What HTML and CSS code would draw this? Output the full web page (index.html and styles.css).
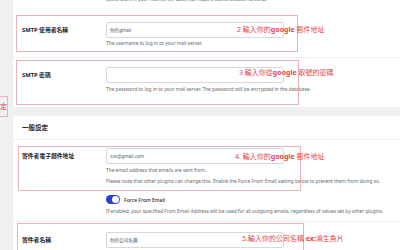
FILE: index.html
```html
<!DOCTYPE html>
<html lang="zh-Hant">

<head>
    <meta charset="UTF-8">
    <meta name="viewport" content="width=device-width, initial-scale=1.0">
    <title>SMTP 設定</title>
    <link rel="stylesheet" href="styles.css">
</head>

<body>
    <div class="page">
        <div class="panel">
            <div class="top">
                <p class="desc">Leave blank if your mail server does not require authentication to send.</p>
            </div>

            <div class="row row-user">
                <div class="label">SMTP 使用者名稱</div>
                <div class="field">
                    <div class="input">你的gmail</div>
                    <p class="desc">The username to log in to your mail server.</p>
                </div>
            </div>

            <div class="row row-pass">
                <div class="label">SMTP 密碼</div>
                <div class="field">
                    <div class="input"></div>
                    <p class="desc">The password to log in to your mail server. The password will be encrypted in the database.</p>
                </div>
            </div>

            <div class="band"></div>
            <div class="heading">一般設定</div>

            <div class="row row-from">
                <div class="label">寄件者電子郵件地址</div>
                <div class="field">
                    <div class="input">xxx@gmail.com</div>
                    <p class="desc first">The email address that emails are sent from.</p>
                    <p class="desc">Please note that other plugins can change this. Enable the Force From Email setting below to prevent them from doing so.</p>
                    <div class="toggle-row">
                        <span class="toggle"></span>
                        <span class="toggle-text">Force From Email</span>
                    </div>
                    <p class="desc">If enabled, your specified From Email Address will be used for all outgoing emails, regardless of values set by other plugins.</p>
                </div>
            </div>

            <div class="row row-name">
                <div class="label">寄件者名稱</div>
                <div class="field">
                    <div class="input">你的公司名稱</div>
                </div>
            </div>
        </div>

        <!-- 標註框 -->
        <div class="mark m0">定</div>
        <div class="mark m1"></div>
        <div class="mark m2"></div>
        <div class="mark m3"></div>
        <div class="mark m4"></div>

        <span class="note n2">2 輸入你的<b>google</b> 郵件地址</span>
        <span class="note n3">3 輸入你從<b>google</b> 取號的密碼</span>
        <span class="note n4">4. 輸入你的<b>google</b> 郵件地址</span>
        <span class="note n5">5.輸入你的公司名稱 <b>ex:</b>鴻生魚片</span>
    </div>
</body>

</html>
```

FILE: styles.css
```css
* {
    box-sizing: border-box;
}

body {
    margin: 0;
    background: #f0f0f1;
    font-family: "Noto Sans", "Noto Sans CJK TC", sans-serif;
    overflow: hidden;
}

.page {
    position: relative;
    height: 250px;
    padding-left: 13px;
    overflow: hidden;
}

.panel {
    height: 100%;
    background: #fff;
}

.top {
    height: 3px;
    display: flex;
    align-items: flex-end;
    padding-left: 93px;
}

.desc {
    margin: 3px 0 0;
    font-size: 4.8px;
    line-height: 7px;
    color: #646970;
    white-space: nowrap;
}

.top .desc {
    margin: 0;
}

.row {
    display: grid;
    grid-template-columns: 84px 1fr;
    align-items: start;
    padding-left: 9px;
}

.label {
    font-size: 5.8px;
    font-weight: 700;
    line-height: 16px;
    color: #1d2327;
    white-space: nowrap;
}

.input {
    width: 178px;
    height: 16px;
    padding: 0 3px;
    border: 1px solid #d6d8db;
    border-radius: 2px;
    font-size: 4.6px;
    line-height: 14px;
    color: #50575e;
}

.row-user {
    padding-top: 19px;
    padding-bottom: 10px;
    border-bottom: 1px solid #f0f0f1;
}

.row-user .desc {
    margin-top: 2px;
}

.row-pass {
    padding-top: 9px;
    padding-bottom: 14px;
}

.band {
    height: 9px;
    background: #f0f0f1;
}

.heading {
    height: 24px;
    padding-left: 9px;
    font-size: 6.5px;
    font-weight: 600;
    line-height: 23px;
    color: #1d2327;
    border-bottom: 1px solid #f0f0f1;
}

.row-from {
    padding-top: 8px;
    padding-bottom: 6px;
    border-bottom: 1px solid #f0f0f1;
}

.row-from .desc {
    margin-top: 4px;
}

.row-from .desc.first {
    margin-top: 3px;
}

.toggle-row {
    display: flex;
    align-items: center;
    height: 9px;
    margin-top: 10px;
}

.toggle {
    width: 14px;
    height: 9px;
    border-radius: 5px;
    background: #2e3fd0;
    display: flex;
    justify-content: flex-end;
    align-items: center;
    padding: 1px;
}

.toggle::after {
    content: "";
    width: 7px;
    height: 7px;
    border-radius: 50%;
    background: #fff;
}

.toggle-text {
    margin-left: 4px;
    font-size: 5px;
    font-weight: 500;
    color: #1d2327;
}

.row-name {
    padding-top: 10px;
}

/* 紅色標註 */
.mark {
    position: absolute;
    border: 1px solid #e9b4b8;
}

.m0 {
    left: 0;
    top: 96px;
    width: 8px;
    height: 21px;
    border-left: none;
    font-size: 7px;
    line-height: 19px;
    color: #e0383e;
    text-align: right;
    overflow: hidden;
}

.m1 {
    left: 16px;
    top: 15px;
    width: 282px;
    height: 37px;
}

.m2 {
    left: 16px;
    top: 60px;
    width: 283px;
    height: 45px;
}

.m3 {
    left: 18px;
    top: 146px;
    width: 283px;
    height: 45px;
}

.m4 {
    left: 17px;
    top: 223px;
    width: 287px;
    height: 40px;
}

.note {
    position: absolute;
    font-size: 7px;
    line-height: 9px;
    color: #e2444a;
    white-space: nowrap;
}

.note b {
    font-weight: 700;
}

.n2 {
    left: 237px;
    top: 25px;
}

.n3 {
    left: 239px;
    top: 68px;
}

.n4 {
    left: 235px;
    top: 152px;
}

.n5 {
    left: 242px;
    top: 234px;
}
```
